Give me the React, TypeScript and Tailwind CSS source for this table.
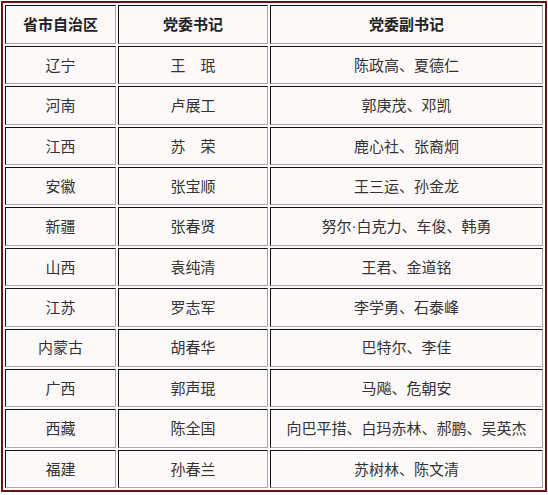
import React from "react";

const rows: [string, string, React.ReactNode][] = [
  ["辽宁", "王　珉", "陈政高、夏德仁"],
  ["河南", "卢展工", "郭庚茂、邓凯"],
  ["江西", "苏　荣", "鹿心社、张裔炯"],
  ["安徽", "张宝顺", "王三运、孙金龙"],
  [
    "新疆",
    "张春贤",
    <>
      努尔<span className="font-['Liberation_Sans']">·</span>白克力、车俊、韩勇
    </>,
  ],
  ["山西", "袁纯清", "王君、金道铭"],
  ["江苏", "罗志军", "李学勇、石泰峰"],
  ["内蒙古", "胡春华", "巴特尔、李佳"],
  ["广西", "郭声琨", "马飚、危朝安"],
  ["西藏", "陈全国", "向巴平措、白玛赤林、郝鹏、吴英杰"],
  ["福建", "孙春兰", "苏树林、陈文清"],
];

const cell =
  "flex items-center justify-center border border-t-[#111] border-l-[#111] border-r-[#a8a8a8] border-b-[#a8a8a8] bg-[#fdf9f9] whitespace-nowrap";

export default function App() {
  return (
    <div className="w-[548px] h-[495px] bg-white pt-px pl-px" style={{ fontFamily: '"Noto Sans CJK SC", "Noto Sans", sans-serif' }}>
      <div className="grid w-[546px] grid-cols-[111px_150px_273px] grid-rows-[39px_repeat(11,38.36px)] gap-[2px] border-2 border-[#6e1010] bg-[#fdf9f9] p-[2px] text-[15px] text-[#333]">
        <div className={cell + " font-bold text-[#222]"}>省市自治区</div>
        <div className={cell + " font-bold text-[#222]"}>党委书记</div>
        <div className={cell + " font-bold text-[#222]"}>党委副书记</div>
        {rows.map((r) => (
          <React.Fragment key={r[0]}>
            <div className={cell}>{r[0]}</div>
            <div className={cell}>{r[1]}</div>
            <div className={cell}>{r[2]}</div>
          </React.Fragment>
        ))}
      </div>
    </div>
  );
}
